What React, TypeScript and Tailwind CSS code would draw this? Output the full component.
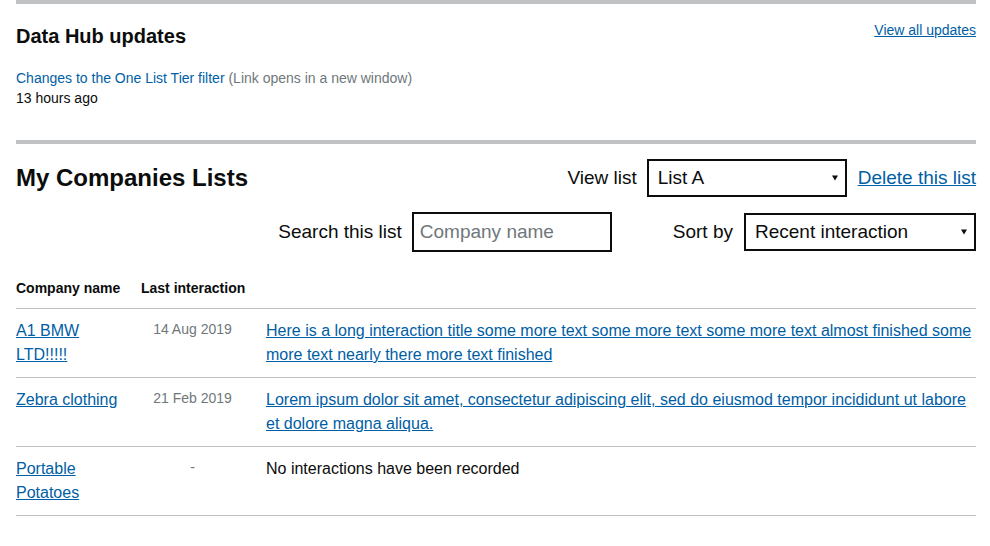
import React from 'react';

const font = { fontFamily: '"Liberation Sans", Arial, sans-serif' };

type Row = {
  name: string;
  date: string;
  title: string;
  linked: boolean;
};

const rows: Row[] = [
  {
    name: 'A1 BMW LTD!!!!!',
    date: '14 Aug 2019',
    title:
      'Here is a long interaction title some more text some more text some more text almost finished some more text nearly there more text finished',
    linked: true,
  },
  {
    name: 'Zebra clothing',
    date: '21 Feb 2019',
    title:
      'Lorem ipsum dolor sit amet, consectetur adipiscing elit, sed do eiusmod tempor incididunt ut labore et dolore magna aliqua.',
    linked: true,
  },
  {
    name: 'Portable Potatoes',
    date: '-',
    title: 'No interactions have been recorded',
    linked: false,
  },
];

const Select = ({ value, width, height }: { value: string; width: string; height: string }) => (
  <div className={`relative ${width} ${height}`}>
    <select
      defaultValue={value}
      className="w-full h-full appearance-none border-2 border-[#0b0c0c] bg-white pl-[9px] pr-6 text-[19px] text-[#0b0c0c] rounded-none outline-none"
      style={font}
    >
      <option>{value}</option>
    </select>
    {/* dropdown arrow */}
    <span className="pointer-events-none absolute right-[9px] top-1/2 -translate-y-1/2 w-0 h-0 border-l-[3px] border-r-[3px] border-t-[5px] border-l-transparent border-r-transparent border-t-[#0b0c0c]" />
  </div>
);

export default function App() {
  return (
    <div className="w-[990px] h-[546px] bg-white text-[#0b0c0c] overflow-hidden" style={font}>
      <div className="w-[960px] ml-4">
        {/* Data Hub updates */}
        <section className="border-t-4 border-[#bfc1c3] pb-8">
          <div className="flex justify-between items-start">
            <h2 className="mt-[21px] text-[20px] leading-[23px] font-bold">Data Hub updates</h2>
            <a href="#" className="mt-[18px] text-[14px] leading-[16px] text-[#005ea5] underline">
              View all updates
            </a>
          </div>
          <div className="mt-5 text-[14px] leading-[20px]">
            <div>
              <a href="#" className="text-[#005ea5]">
                Changes to the One List Tier filter
              </a>{' '}
              <span className="text-[#6f777b]">(Link opens in a new window)</span>
            </div>
            <div>13 hours ago</div>
          </div>
        </section>

        {/* My Companies Lists */}
        <section className="border-t-4 border-[#bfc1c3]">
          <div className="mt-[15px] flex justify-between items-center">
            <h2 className="text-[24px] leading-[28px] font-bold">My Companies Lists</h2>
            <div className="flex items-center text-[19px]">
              <span>View list</span>
              <div className="ml-[10px]">
                <Select value="List A" width="w-[200px]" height="h-[38px]" />
              </div>
              <a href="#" className="ml-[11px] text-[#005ea5] underline">
                Delete this list
              </a>
            </div>
          </div>

          <div className="mt-[15px] flex justify-end items-center text-[19px]">
            <span>Search this list</span>
            <input
              placeholder="Company name"
              className="ml-[10px] w-[200px] h-[40px] border-2 border-[#0b0c0c] pl-[6px] text-[19px] placeholder:text-[#6f777b] outline-none"
              style={font}
            />
            <span className="ml-[61px]">Sort by</span>
            <div className="ml-[11px]">
              <Select value="Recent interaction" width="w-[232px]" height="h-[38px]" />
            </div>
          </div>

          {/* Table */}
          <div className="mt-[26px]">
            <div className="grid grid-cols-[125px_125px_1fr] border-b border-[#bfc1c3] pb-[10px] text-[14px] leading-[20px] font-bold">
              <div>Company name</div>
              <div>Last interaction</div>
              <div />
            </div>
            {rows.map((row) => (
              <div
                key={row.name}
                className="grid grid-cols-[125px_125px_1fr] border-b border-[#bfc1c3] py-[10px] text-[16px] leading-[24px]"
              >
                <div className="pr-[20px]">
                  <a href="#" className="text-[#005ea5] underline">
                    {row.name}
                  </a>
                </div>
                <div className="pr-[22px] text-center text-[14px] leading-[20px] text-[#6f777b]">{row.date}</div>
                <div>
                  {row.linked ? (
                    <a href="#" className="text-[#005ea5] underline">
                      {row.title}
                    </a>
                  ) : (
                    <span>{row.title}</span>
                  )}
                </div>
              </div>
            ))}
          </div>
        </section>
      </div>
    </div>
  );
}
